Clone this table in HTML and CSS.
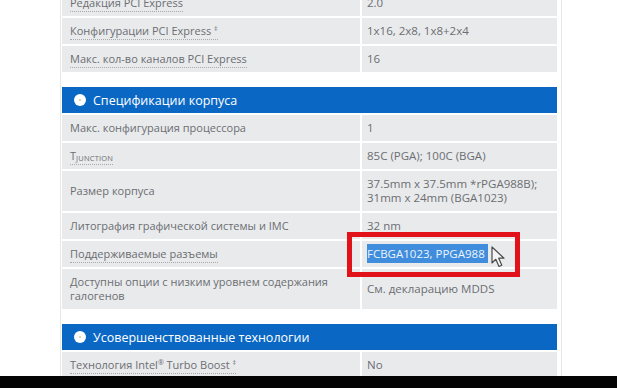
FILE: index.html
```html
<!DOCTYPE html>
<html lang="ru">
<head>
<meta charset="utf-8">
<link rel="stylesheet" href="styles.css">
</head>
<body>
<div class="screen">
  <div class="viewport">
    <div class="panel">
      <div class="section">
        <div class="row"><div class="label"><div><span class="tip">Редакция PCI Express</span></div></div><div class="value"><div>2.0</div></div></div>
        <div class="row"><div class="label"><div><span class="tip">Конфигурации PCI Express <sup>‡</sup></span></div></div><div class="value"><div>1x16, 2x8, 1x8+2x4</div></div></div>
        <div class="row"><div class="label"><div><span class="tip">Макс. кол-во каналов PCI Express</span></div></div><div class="value"><div>16</div></div></div>
      </div>

      <div class="section">
        <div class="head"><span class="dot"></span>Спецификации корпуса</div>
        <div class="row"><div class="label"><div>Макс. конфигурация процессора</div></div><div class="value"><div>1</div></div></div>
        <div class="row"><div class="label"><div><span class="tip">T<sub>JUNCTION</sub></span></div></div><div class="value"><div>85C (PGA); 100C (BGA)</div></div></div>
        <div class="row"><div class="label"><div>Размер корпуса</div></div><div class="value"><div>37.5mm x 37.5mm *rPGA988B);<br>31mm x 24mm (BGA1023)</div></div></div>
        <div class="row"><div class="label"><div>Литография графической системы и IMC</div></div><div class="value"><div>32 nm</div></div></div>
        <div class="row"><div class="label"><div><span class="tip">Поддерживаемые разъемы</span></div></div><div class="value marked"><div><span class="sel">FCBGA1023, PPGA988</span></div><span class="redbox"></span><svg class="cursor" width="15" height="22" viewBox="0 0 15 22"><path d="M1 1 L1 17 L4.8 13.3 L8 20.5 L10.8 19.3 L7.7 12.2 L13 12.2 Z" fill="#f4f4f4" stroke="#4a4a4a" stroke-width="1.2" stroke-linejoin="round"/></svg></div></div>
        <div class="row"><div class="label"><div>Доступны опции с низким уровнем содержания<br>галогенов</div></div><div class="value"><div>См. декларацию MDDS</div></div></div>
      </div>

      <div class="section">
        <div class="head"><span class="dot"></span>Усовершенствованные технологии</div>
        <div class="row"><div class="label"><div><span class="tip">Технология Intel<sup>®</sup> Turbo Boost <sup>‡</sup></span></div></div><div class="value"><div>No</div></div></div>
      </div>
    </div>
  </div>
  <div class="blackbar"></div>
</div>
</body>
</html>
```

FILE: styles.css
```css
* { box-sizing: border-box; }
html, body { margin: 0; padding: 0; background: #fff; }
body { font-family: "Open Sans", "Noto Sans", sans-serif; color: #6b6e72; }

.screen {
  width: 617px;
  height: 388px;
  display: flex;
  flex-direction: column;
  overflow: hidden;
}
.viewport {
  flex: 1;
  overflow: hidden;
  background: #fff;
}
.blackbar {
  height: 12px;
  background: #040404;
}

.panel {
  margin-top: -10px;
  margin-left: 60px;
  width: 502px;
  padding: 0 4px 0 1px;
  border-left: 1px solid #e6e7e9;
  border-right: 1px solid #e6e7e9;
  min-height: 420px;
}

.section { margin-bottom: 15px; }

.head {
  height: 26px;
  background: #0a68c4;
  color: #fff;
  font-size: 12.5px;
  display: flex;
  align-items: center;
  padding-left: 12px;
  margin-bottom: 2px;
  width: 495px;
}
.dot {
  width: 12px;
  height: 12px;
  border-radius: 50%;
  background: #fff;
  margin-right: 7px;
  position: relative;
}
.dot::after {
  content: "";
  position: absolute;
  left: 5px; top: 5px;
  width: 2px; height: 2px;
  background: #d8c98a;
  border-radius: 50%;
}

.row {
  display: grid;
  grid-template-columns: 298px 195px;
  column-gap: 2px;
  margin-bottom: 2px;
  line-height: 14px;
}
.label, .value {
  background: #e9eaec;
  padding: 6px 6px 6px 8px;
  display: flex;
  align-items: center;
}
.label { font-size: 11px; }
.value { padding-left: 5px; font-size: 11.5px; }

.tip { border-bottom: 1px dotted #a7a9ad; padding-bottom: 1px; }
sup { font-size: 7px; vertical-align: 4px; line-height: 0; }
sub { font-size: 7.5px; vertical-align: -1px; line-height: 0; letter-spacing: 0.2px; }

.marked { position: relative; }
.sel {
  background: #3f8ddc;
  color: #eef4fb;
  padding: 2px 3px 2px 0;
}
.redbox {
  position: absolute;
  left: -15px;
  top: -9px;
  width: 173px;
  height: 45px;
  border: 5px solid #e2121a;
}
.cursor {
  position: absolute;
  left: 129px;
  top: 5px;
}
```
